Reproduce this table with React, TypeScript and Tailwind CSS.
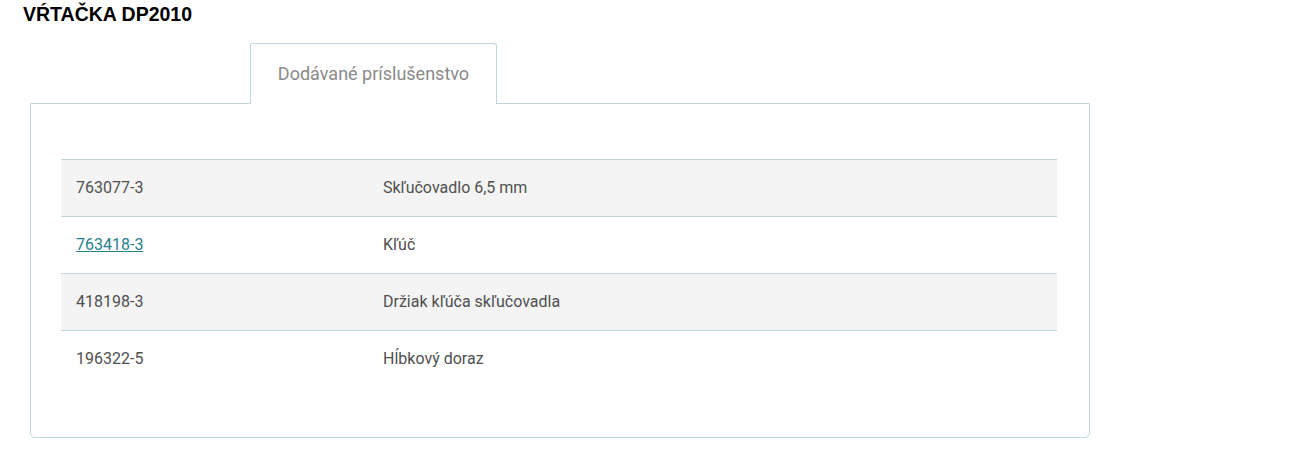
const rows = [
  { code: "763077-3", name: "Skľučovadlo 6,5 mm", link: false },
  { code: "763418-3", name: "Kľúč", link: true },
  { code: "418198-3", name: "Držiak kľúča skľučovadla", link: false },
  { code: "196322-5", name: "Hĺbkový doraz", link: false },
];

export default function App() {
  return (
    <div className="min-h-screen bg-white">
      <h1 className="pl-[23px] pt-[3px] text-[19.5px] font-bold leading-[23px] text-black [font-family:'Liberation_Sans',Arial,sans-serif]">
        VŔTAČKA DP2010
      </h1>

      <div className="ml-[30px] mt-[17px] w-[1060px] [font-family:Roboto,'Noto_Sans',sans-serif]">
        <div className="flex pl-[220px]">
          <div className="relative z-10 -mb-px flex h-[61px] w-[247px] items-center justify-center rounded-t-[3px] border border-b-0 border-[#bcd8dd] bg-white pb-[1px] text-[18px] text-[#8a8a8a]">
            Dodávané príslušenstvo
          </div>
        </div>

        <div className="h-[335px] rounded-b-[5px] border border-[#bcd8dd] pl-[30px] pr-[32px] pt-[55px]">
          <table className="w-full table-fixed border-collapse text-[16px] text-[#505050]">
            <colgroup>
              <col className="w-[322px]" />
              <col />
            </colgroup>
            <tbody>
              {rows.map((r, i) => (
                <tr
                  key={r.code}
                  className={`h-[57px] ${i < 3 ? "border-y border-[#bcd8dd]" : "border-t border-[#bcd8dd]"} ${i % 2 === 0 ? "bg-[#f4f4f4]" : "bg-white"}`}
                >
                  <td className="pl-[15px]">
                    {r.link ? (
                      <a href="#" className="text-[#26808e] underline">
                        {r.code}
                      </a>
                    ) : (
                      r.code
                    )}
                  </td>
                  <td>{r.name}</td>
                </tr>
              ))}
            </tbody>
          </table>
        </div>
      </div>
    </div>
  );
}
